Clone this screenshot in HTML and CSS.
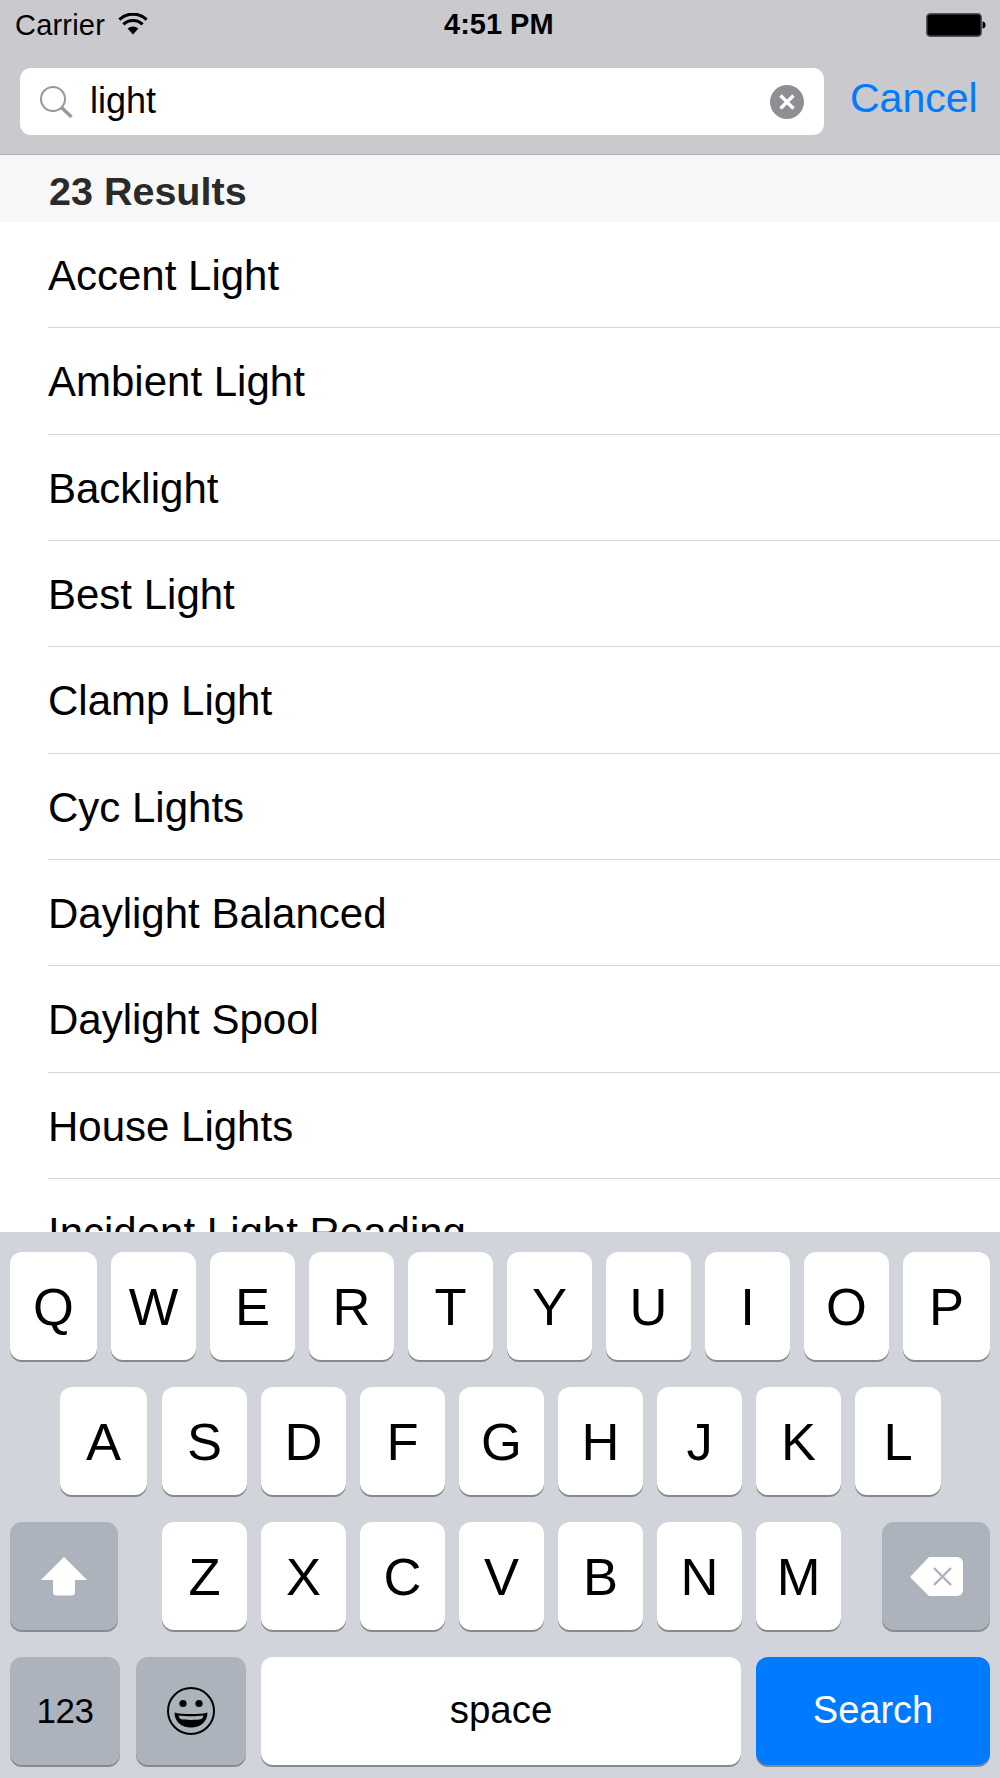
FILE: index.html
```html
<!DOCTYPE html>
<html lang="en">
<head>
<meta charset="utf-8">
<title>Search</title>
<link rel="stylesheet" href="styles.css">
</head>
<body>
<div class="screen">
  <header class="top">
    <div class="status">
      <div class="status-left">
        <span class="carrier">Carrier</span>
        <svg class="wifi" viewBox="0 0 30 22"><path d="M15 21.5 9.6 15.6a8 8 0 0 1 10.8 0z" fill="#000"/><path d="M5.4 11.4a13.8 13.8 0 0 1 19.2 0M1.4 6.6a19.6 19.6 0 0 1 27.2 0" fill="none" stroke="#000" stroke-width="3.2"/></svg>
      </div>
      <span class="time">4:51 PM</span>
      <svg class="battery" viewBox="0 0 60 24"><rect x=".75" y=".75" width="54.5" height="22.5" rx="3.5" fill="#000" stroke="#56565a" stroke-width="1.5"/><path d="M56.5 8.5c2 0 3 1.5 3 3.5s-1 3.500-3 3.500z" fill="#000"/></svg>
    </div>
    <div class="searchbar">
      <div class="field">
        <svg class="glass" viewBox="0 0 34 34"><circle cx="14" cy="14" r="12" fill="none" stroke="#98989c" stroke-width="2"/><path d="M22.500 22.500 32.500 32" stroke="#98989c" stroke-width="3.400" fill="none"/></svg>
        <span class="query">light</span>
        <svg class="clear" viewBox="0 0 34 34"><circle cx="17" cy="17" r="17" fill="#8e8e93"/><path d="M10.500 10.500 23.500 23.500M23.500 10.500 10.500 23.500" stroke="#fff" stroke-width="3.400" fill="none"/></svg>
      </div>
      <span class="cancel">Cancel</span>
    </div>
  </header>
  <div class="section">23 Results</div>
  <ul class="list">
    <li class="row">Accent Light</li>
    <li class="row">Ambient Light</li>
    <li class="row">Backlight</li>
    <li class="row">Best Light</li>
    <li class="row">Clamp Light</li>
    <li class="row">Cyc Lights</li>
    <li class="row">Daylight Balanced</li>
    <li class="row">Daylight Spool</li>
    <li class="row">House Lights</li>
    <li class="row">Incident Light Reading</li>
  </ul>
  <div class="keyboard">
    <div class="keys keys-1">
      <span class="key edge">Q</span><span class="key">W</span><span class="key">E</span><span class="key">R</span><span class="key">T</span><span class="key">Y</span><span class="key">U</span><span class="key">I</span><span class="key">O</span><span class="key edge">P</span>
    </div>
    <div class="keys keys-2">
      <span class="key edge first">A</span><span class="key">S</span><span class="key">D</span><span class="key">F</span><span class="key">G</span><span class="key">H</span><span class="key">J</span><span class="key">K</span><span class="key end">L</span>
    </div>
    <div class="keys keys-3">
      <span class="key alt shift"><svg class="shift-icon" viewBox="0 0 46 39"><path d="M23 0 46 23H34V35a3.500 3.500 0 0 1-3.500 3.500h-15A3.500 3.500 0 0 1 12 35V23H0z" fill="#fff"/></svg></span>
      <span class="key">Z</span><span class="key">X</span><span class="key">C</span><span class="key">V</span><span class="key">B</span><span class="key">N</span><span class="key">M</span>
      <span class="key alt back"><svg class="back-icon" viewBox="0 0 53 39"><path d="M19 0H47a6 6 0 0 1 6 6V33a6 6 0 0 1-6 6H19L0 20z" fill="#fff"/><path d="M24 11 41 28M41 11 24 28" stroke="#adb1bb" stroke-width="2.400" fill="none"/></svg></span>
    </div>
    <div class="keys keys-4">
      <span class="key alt num">123</span>
      <span class="key alt emoji"><svg class="smile" viewBox="0 0 50 50"><circle cx="25" cy="25" r="23" fill="none" stroke="#000" stroke-width="2"/><circle cx="17" cy="17.500" r="3.600" fill="#000"/><circle cx="33" cy="17.500" r="3.600" fill="#000"/><path d="M8.500 26.500c5 2 28 2 33 0 0 9-7 15-16.500 15S8.500 35.500 8.500 26.500z" fill="#000"/><path d="M12.500 29.500c6 1 19 1 25 0-.5 1.600-1 2.500-2 3.500-6 1.200-15 1.200-21 0-1-1-1.600-2-2-3.500z" fill="#adb3bc"/></svg></span>
      <span class="key space">space</span>
      <span class="key go">Search</span>
    </div>
  </div>
</div>
</body>
</html>
```

FILE: styles.css
```css
* { box-sizing: border-box; margin: 0; padding: 0; }
html, body { width: 1000px; height: 1778px; overflow: hidden; }
body { font-family: "Liberation Sans", Arial, sans-serif; color: #000; background: #fff; }
.screen { display: flex; flex-direction: column; height: 1778px; }

.top { height: 155px; flex: none; background: #c9c9ce; border-bottom: 1px solid #b0b0b4; }
.status { display: flex; align-items: center; justify-content: space-between; height: 50px; padding: 0 14px 0 15px; position: relative; }
.status-left { display: flex; align-items: center; gap: 13px; }
.carrier { font-size: 29px; letter-spacing: .2px; }
.wifi { width: 30px; height: 22px; margin-top: -2px; }
.time { font-size: 29px; font-weight: 700; position: absolute; left: 444px; top: 8px; }
.battery { width: 60px; height: 24px; margin-top: -1px; }

.searchbar { display: flex; align-items: center; padding: 18px 23px 0 20px; }
.field { flex: none; width: 804px; height: 67px; background: #fff; border-radius: 11px; display: flex; align-items: center; padding: 0 20px 0 19px; }
.glass { width: 34px; height: 34px; flex: none; }
.query { font-size: 36px; margin-left: 17px; margin-top: -2px; flex: 1; }
.clear { width: 34px; height: 34px; flex: none; }
.cancel { font-size: 41px; color: #007aff; margin-left: 26px; margin-top: -6px; }

.section { height: 67px; flex: none; background: #f7f7f7; color: #2a2a2a; font-size: 39.5px; font-weight: 700; line-height: 72px; padding-left: 49px; }

.list { list-style: none; flex: 1; overflow: hidden; padding-left: 48px; }
.row { height: 106.33px; line-height: 108px; font-size: 42px; border-bottom: 1px solid #d5d5d8; white-space: nowrap; }

.keyboard { height: 546px; flex: none; background: #d1d4db; padding: 20px 10px 0; display: flex; flex-direction: column; gap: 27px; }
.keys { display: flex; height: 108px; gap: 14px; flex: none; }
.keys-2 { padding-left: 50px; }
.key { flex: none; width: 85px; display: flex; align-items: center; justify-content: center; background: #fff; border-radius: 12px; box-shadow: 0 2px 0 #88898d; font-size: 52.5px; }
.key.edge { width: 87px; }
.key.first { margin-right: 1px; }
.key.end { width: 86px; }
.key.alt { background: #adb3bc; }
.shift, .back { width: 108px; }
.shift { margin-right: 30px; }
.back { margin-left: 27px; }
.shift-icon { width: 46px; height: 39px; }
.back-icon { width: 53px; height: 39px; }
.key.num { width: 110px; font-size: 35px; letter-spacing: -.5px; }
.key.emoji { width: 110px; margin-left: 2px; }
.smile { width: 50px; height: 50px; }
.key.space { width: 480px; margin-left: 1px; font-size: 38.500px; padding-bottom: 2px; }
.key.go { width: 234px; margin-left: 1px; background: #007aff; color: #fff; font-size: 38px; padding-bottom: 2px; }
```
